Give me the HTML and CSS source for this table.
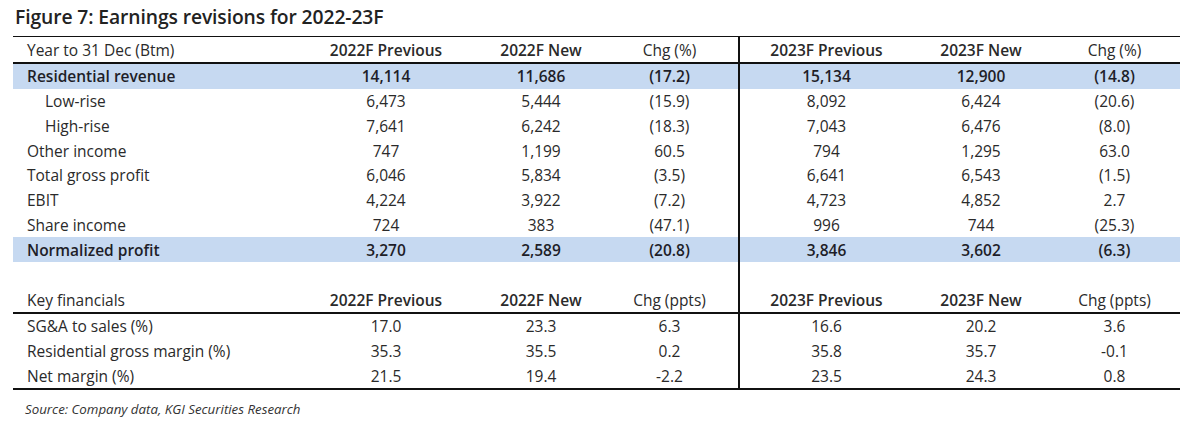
FILE: index.html
```html
<!DOCTYPE html>
<html lang="en">
<head>
<meta charset="utf-8">
<title>Figure 7: Earnings revisions for 2022-23F</title>
<link rel="stylesheet" href="styles.css">
</head>
<body>
<div class="figure">
  <h1 class="fig-title">Figure 7: Earnings revisions for 2022-23F</h1>
  <table class="rev">
    <colgroup>
      <col class="c-label">
      <col class="c2"><col class="c3"><col class="c4">
      <col class="c5"><col class="c6"><col class="c7">
    </colgroup>
    <thead>
      <tr class="head first">
        <th class="lbl">Year to 31 Dec (Btm)</th>
        <th class="yr">2022F Previous</th>
        <th class="yr">2022F New</th>
        <th class="chg pad">Chg (%)</th>
        <th class="yr split">2023F Previous</th>
        <th class="yr">2023F New</th>
        <th class="chg">Chg (%)</th>
      </tr>
    </thead>
    <tbody>
      <tr class="hl">
        <td class="lbl">Residential revenue</td>
        <td>14,114</td><td>11,686</td><td class="pad">(17.2)</td>
        <td class="split">15,134</td><td>12,900</td><td>(14.8)</td>
      </tr>
      <tr>
        <td class="lbl sub">Low-rise</td>
        <td>6,473</td><td>5,444</td><td class="pad">(15.9)</td>
        <td class="split">8,092</td><td>6,424</td><td>(20.6)</td>
      </tr>
      <tr>
        <td class="lbl sub">High-rise</td>
        <td>7,641</td><td>6,242</td><td class="pad">(18.3)</td>
        <td class="split">7,043</td><td>6,476</td><td>(8.0)</td>
      </tr>
      <tr>
        <td class="lbl">Other income</td>
        <td>747</td><td>1,199</td><td class="pad">60.5</td>
        <td class="split">794</td><td>1,295</td><td>63.0</td>
      </tr>
      <tr>
        <td class="lbl">Total gross profit</td>
        <td>6,046</td><td>5,834</td><td class="pad">(3.5)</td>
        <td class="split">6,641</td><td>6,543</td><td>(1.5)</td>
      </tr>
      <tr>
        <td class="lbl">EBIT</td>
        <td>4,224</td><td>3,922</td><td class="pad">(7.2)</td>
        <td class="split">4,723</td><td>4,852</td><td>2.7</td>
      </tr>
      <tr>
        <td class="lbl">Share income</td>
        <td>724</td><td>383</td><td class="pad">(47.1)</td>
        <td class="split">996</td><td>744</td><td>(25.3)</td>
      </tr>
      <tr class="hl">
        <td class="lbl">Normalized profit</td>
        <td>3,270</td><td>2,589</td><td class="pad">(20.8)</td>
        <td class="split">3,846</td><td>3,602</td><td>(6.3)</td>
      </tr>
      <tr class="spacer">
        <td colspan="4"></td>
        <td class="split" colspan="3"></td>
      </tr>
      <tr class="head second">
        <th class="lbl">Key financials</th>
        <th class="yr">2022F Previous</th>
        <th class="yr">2022F New</th>
        <th class="chg pad">Chg (ppts)</th>
        <th class="yr split">2023F Previous</th>
        <th class="yr">2023F New</th>
        <th class="chg">Chg (ppts)</th>
      </tr>
      <tr>
        <td class="lbl">SG&amp;A to sales (%)</td>
        <td>17.0</td><td>23.3</td><td class="pad">6.3</td>
        <td class="split">16.6</td><td>20.2</td><td>3.6</td>
      </tr>
      <tr>
        <td class="lbl">Residential gross margin (%)</td>
        <td>35.3</td><td>35.5</td><td class="pad">0.2</td>
        <td class="split">35.8</td><td>35.7</td><td>-0.1</td>
      </tr>
      <tr class="last">
        <td class="lbl">Net margin (%)</td>
        <td>21.5</td><td>19.4</td><td class="pad">-2.2</td>
        <td class="split">23.5</td><td>24.3</td><td>0.8</td>
      </tr>
    </tbody>
  </table>
  <p class="source">Source: Company data, KGI Securities Research</p>
</div>
</body>
</html>
```
FILE: styles.css
```css
html, body {
  margin: 0;
  padding: 0;
  background: #ffffff;
}

body {
  font-family: "Open Sans", "Noto Sans", sans-serif;
  color: #2a2a2a;
}

.figure {
  padding: 5px 0 0 13px;
  width: 1167px;
}

.fig-title {
  margin: 0 0 8px 2px;
  font-size: 19.3px;
  line-height: 23px;
  font-weight: 600;
  color: #222222;
  letter-spacing: -0.1px;
}

.rev {
  width: 1167px;
  table-layout: fixed;
  border-collapse: collapse;
  font-size: 15.5px;
}

.c-label { width: 287px; }
.c2 { width: 172px; }
.c3 { width: 138px; }
.c4 { width: 129px; }
.c5 { width: 174px; }
.c6 { width: 136px; }
.c7 { width: 131px; }

.rev th,
.rev td {
  padding: 0;
  height: 24.75px;
  text-align: center;
  white-space: nowrap;
  vertical-align: middle;
  line-height: 20px;
}

.rev .lbl {
  text-align: left;
  padding-left: 14px;
}

.rev .lbl.sub {
  padding-left: 32px;
}

.rev .pad {
  padding-right: 9px;
}

.rev .split {
  border-left: 2px solid #111111;
}

.head th {
  font-weight: 600;
  height: 25px;
}

.head th.chg {
  font-weight: 400;
}

.head th.lbl {
  font-weight: 500;
}

.head.first th {
  border-top: 1px solid #111111;
  border-bottom: 2px solid #111111;
}

.head.second th {
  border-bottom: 2px solid #111111;
}

.hl td {
  background: #c6d9f1;
  font-weight: 600;
  color: #1e1e28;
}

.spacer td {
  height: 25px;
}

.last td {
  border-bottom: 2px solid #111111;
}

.source {
  margin: 10px 0 0 12px;
  font-size: 13.3px;
  line-height: 18px;
  font-style: italic;
  color: #333333;
}
```
